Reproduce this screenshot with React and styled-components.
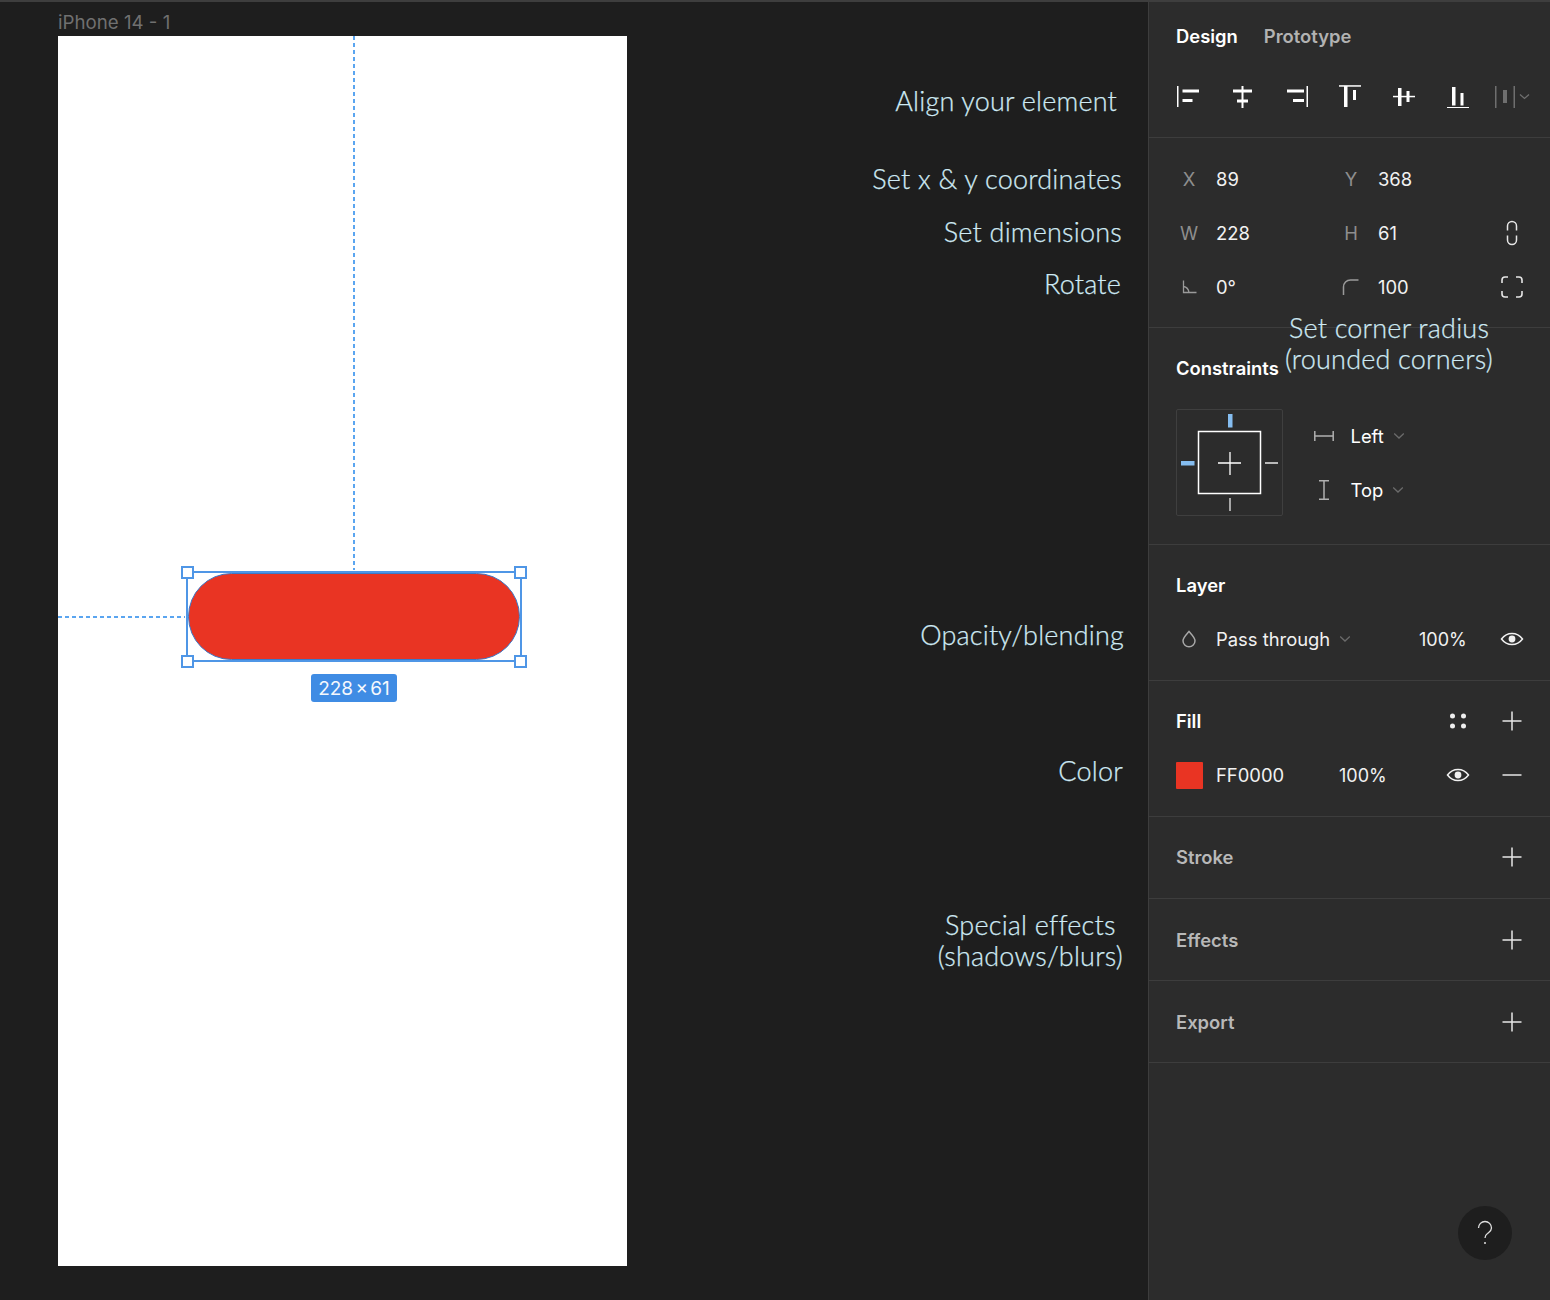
import React from "react";
import styled, { createGlobalStyle } from "styled-components";

const Global = createGlobalStyle`
  html, body { margin: 0; padding: 0; background: #1e1e1e; }
  * { box-sizing: border-box; }
`;

const Page = styled.div`
  position: relative;
  width: 1550px;
  height: 1300px;
  overflow: hidden;
  display: flex;
  background: #1e1e1e;
  border-top: 2px solid #3e3e3e;
  font-family: Inter, "Liberation Sans", sans-serif;
  color: #fff;
`;

const Canvas = styled.main`
  width: 1148px;
  flex: none;
  padding: 8px 0 0 58px;
`;

const FrameLabel = styled.div`
  height: 26px;
  font-size: 18.7px;
  line-height: 25px;
  color: #707070;
`;

const Artboard = styled.div`
  position: relative;
  width: 569px;
  height: 1230px;
  background: #fff;
`;

const VGuide = styled.div`
  position: absolute;
  left: 295px;
  top: 0;
  width: 2px;
  height: 534px;
  background: repeating-linear-gradient(to bottom, #5aa5f0 0 4px, transparent 4px 7px);
`;

const HGuide = styled.div`
  position: absolute;
  left: 0;
  top: 580px;
  width: 127px;
  height: 2px;
  background: repeating-linear-gradient(to right, #5aa5f0 0 4px, transparent 4px 7px);
`;

const Selection = styled.div`
  position: absolute;
  left: 128px;
  top: 535px;
  width: 336px;
  height: 91px;
  border: 2px solid #4f96e6;
`;

const Pill = styled.div`
  width: 100%;
  height: 100%;
  background: #e93423;
  border: 1px solid #3b79c9;
  border-radius: 45px;
`;

const Handle = styled.span`
  position: absolute;
  width: 13px;
  height: 13px;
  background: #fff;
  border: 2px solid #4f96e6;
  left: ${(p) => (p.$right ? "326px" : "-7px")};
  top: ${(p) => (p.$bottom ? "82px" : "-7px")};
`;

const SizeTag = styled.div`
  position: absolute;
  left: 253px;
  top: 638px;
  width: 86px;
  height: 28px;
  background: #3f8ce4;
  border-radius: 3px;
  color: #f4f8fd;
  font-size: 19px;
  line-height: 29px;
  word-spacing: -3px;
  text-align: center;
  white-space: nowrap;
`;

const Note = styled.div`
  position: absolute;
  top: ${(p) => p.$top}px;
  right: ${(p) => p.$right}px;
  font-family: Lato, "Open Sans", sans-serif;
  font-weight: 300;
  font-size: 27px;
  line-height: 31px;
  letter-spacing: 0.2px;
  color: #cfeaf4;
  -webkit-text-stroke: 0.25px #cfeaf4;
  text-align: center;
  white-space: nowrap;
`;

const Panel = styled.aside`
  width: 402px;
  flex: none;
  background: #2c2c2c;
  border-left: 1.5px solid #3d3d3d;
  font-size: 18.4px;
`;

const Section = styled.section`
  height: ${(p) => p.$h}px;
  padding: ${(p) => p.$pt ?? 0}px 24px 0 27px;
  border-bottom: 1.5px solid #3d3d3d;
`;

const Tabs = styled.div`
  display: flex;
  gap: 26px;
  height: 68px;
  align-items: center;
`;

const Tab = styled.div`
  font-weight: 600;
  font-size: 18.4px;
  color: ${(p) => (p.$active ? "#fff" : "#b2b2b2")};
`;

const AlignRow = styled.div`
  display: grid;
  grid-template-columns: repeat(7, 54px);
  margin: 2px 0 0 -15px;
  align-items: center;
  justify-items: center;
  height: 48px;
`;

const PropRow = styled.div`
  display: grid;
  grid-template-columns: 40px 122px 40px 120px 28px;
  align-items: center;
  height: ${(p) => p.$h ?? 54}px;
`;

const PropLabel = styled.div`
  width: 26px;
  text-align: center;
  color: #8e8e8e;
  font-size: 18.4px;
  display: flex;
  justify-content: center;
`;

const Value = styled.div`
  color: #f2f2f2;
  font-size: 18.4px;
  white-space: nowrap;
`;

const Percent = styled.div`
  color: #f2f2f2;
  font-size: 18px;
  white-space: nowrap;
`;

const IconCell = styled.div`
  display: flex;
  justify-content: center;
  align-items: center;
`;

const Title = styled.div`
  font-weight: 600;
  font-size: 18.4px;
  color: ${(p) => (p.$dim ? "#b8b8b8" : "#fff")};
`;

const TitleRow = styled.div`
  display: flex;
  align-items: center;
  justify-content: space-between;
  height: 28px;
`;

const IconPair = styled.div`
  display: flex;
  gap: 26px;
`;

const ConstraintBody = styled.div`
  display: flex;
  gap: 26px;
  margin-top: 27px;
`;

const ConstraintBox = styled.div`
  width: 107px;
  height: 107px;
  flex: none;
  border: 1.5px solid #3f3f3f;
  border-radius: 2px;
`;

const ConstraintList = styled.div`
  display: flex;
  flex-direction: column;
`;

const ConstraintRow = styled.div`
  display: flex;
  align-items: center;
  height: 54px;
  gap: 3.5px;
`;

const ConstraintIcon = styled.span`
  width: 29px;
  margin-right: 9px;
  display: flex;
  justify-content: center;
`;

const LayerRow = styled.div`
  display: grid;
  grid-template-columns: 40px 203px 79px 28px;
  align-items: center;
  height: 54px;
  margin-top: 13px;
`;

const FillRow = styled.div`
  display: grid;
  grid-template-columns: 40px 123px 105px 28px 26px 28px;
  align-items: center;
  height: 54px;
  margin-top: 13px;
`;

const Select = styled.div`
  display: flex;
  align-items: center;
  gap: 9px;
`;

const Swatch = styled.div`
  width: 27px;
  height: 27px;
  background: #e93423;
  border-radius: 1px;
`;

const HelpButton = styled.div`
  position: absolute;
  left: 1458px;
  top: 1204px;
  width: 54px;
  height: 54px;
  border-radius: 50%;
  background: #1e1e1e;
  display: flex;
  align-items: center;
  justify-content: center;
`;

const Ico = ({ w = 24, h = 24, children, ...r }) => (
  <svg width={w} height={h} viewBox={`0 0 ${w} ${h}`} fill="none" style={{ display: "block" }} {...r}>
    {children}
  </svg>
);

const Bars = ({ lines, bars, fill = "#fff" }) => (
  <Ico>
    {[...lines, ...bars].map(([x, y, w, h], i) => (
      <rect key={i} x={x} y={y} width={w} height={h} fill={fill} />
    ))}
  </Ico>
);

const alignIcons = [
  { lines: [[1, 2, 1.5, 21]], bars: [[6.5, 5.5, 16.5, 3], [6.5, 15, 10, 3]] },
  { lines: [[11.5, 2, 2, 22]], bars: [[3, 5.5, 19, 3], [7, 15.5, 11, 3]] },
  { lines: [[22.5, 2, 1.5, 21]], bars: [[3, 5.5, 17, 3], [9, 15, 11, 3]] },
  { lines: [[1, 1.2, 22, 1.5]], bars: [[6, 2, 3.5, 21], [15, 6, 3, 10]] },
  { lines: [[1, 11.8, 22, 1.5]], bars: [[6, 4, 3.5, 18], [14.5, 7, 3, 11]] },
  { lines: [[1, 23, 22, 1.5]], bars: [[6, 3, 3.5, 18.5], [14.5, 9, 3, 12.5]] },
];

const Distribute = () => (
  <Ico w={36} h={24}>
    <rect x="1" y="2" width="1.5" height="22" fill="#6f6f6f" />
    <rect x="19.500" y="2" width="1.5" height="22" fill="#6f6f6f" />
    <rect x="9" y="6" width="4" height="13" fill="#6f6f6f" />
    <path d="M26 10.500l4.500 4 4.500-4" stroke="#6f6f6f" strokeWidth="1.3" />
  </Ico>
);

const Chevron = () => (
  <Ico w={12} h={8}>
    <path d="M1.200 1.500l4.800 4.500 4.800-4.500" stroke="#6b6b6b" strokeWidth="1.3" />
  </Ico>
);

const Plus = () => (
  <Ico w={28} h={28}>
    <path d="M14 4.500v19M4.500 14h19" stroke="#e6e6e6" strokeWidth="1.5" />
  </Ico>
);

const Minus = () => (
  <Ico w={28} h={28}>
    <path d="M4.500 14h19" stroke="#e6e6e6" strokeWidth="1.5" />
  </Ico>
);

const Eye = () => (
  <Ico w={28} h={28}>
    <path d="M3.500 14C6.500 10 10 8.500 14 8.500s7.500 1.500 10.500 5.500c-3 4-6.500 5.500-10.500 5.500S6.500 18 3.500 14z" stroke="#f0f0f0" strokeWidth="1.5" />
    <circle cx="14" cy="14" r="3.400" fill="#f0f0f0" />
  </Ico>
);

const Dots = () => (
  <Ico w={28} h={28}>
    <circle cx="8.500" cy="9" r="2.500" fill="#eee" />
    <circle cx="19.500" cy="9" r="2.500" fill="#eee" />
    <circle cx="8.500" cy="19" r="2.500" fill="#eee" />
    <circle cx="19.500" cy="19" r="2.500" fill="#eee" />
  </Ico>
);

const Angle = () => (
  <Ico w={16} h={16}>
    <path d="M2.500 1.500v12h13M2.500 7.500c3 .5 5 2.500 5.500 6" stroke="#9a9a9a" strokeWidth="1.300" />
  </Ico>
);

const Corner = () => (
  <Ico w={18} h={18}>
    <path d="M1.500 17V9c0-4 3-7 7-7h8" stroke="#9a9a9a" strokeWidth="1.500" />
  </Ico>
);

const Ratio = () => (
  <Ico w={14} h={26}>
    <path d="M2.500 10.500V6a4.500 4.500 0 019 0v4.500M2.500 15.500V20a4.500 4.500 0 009 0v-4.500" stroke="#e6e6e6" strokeWidth="1.500" />
  </Ico>
);

const Corners = () => (
  <Ico w={24} h={24}>
    <path d="M2 8V5a3 3 0 013-3h3M16 2h3a3 3 0 013 3v3M22 16v3a3 3 0 01-3 3h-3M8 22H5a3 3 0 01-3-3v-3" stroke="#e6e6e6" strokeWidth="1.600" />
  </Ico>
);

const Drop = () => (
  <Ico w={16} h={18}>
    <path d="M8 1.500c3 3.500 6 6 6 9.300a6 6 0 01-12 0c0-3.300 3-5.800 6-9.300z" stroke="#a8a8a8" strokeWidth="1.500" />
  </Ico>
);

const HSpan = () => (
  <Ico w={20} h={10}>
    <path d="M.8 0v10M19.200 0v10M1 5h18" stroke="#b0b0b0" strokeWidth="1.500" />
  </Ico>
);

const VSpan = () => (
  <Ico w={10} h={20}>
    <path d="M0 .8h10M0 19.200h10M5 1v18" stroke="#b0b0b0" strokeWidth="1.500" />
  </Ico>
);

const ConstraintDiagram = () => (
  <Ico w={104} h={104}>
    <g transform="translate(1 1)">
      <rect x="20.500" y="20.500" width="62" height="62" stroke="#fff" strokeWidth="1.500" />
      <path d="M52 41v23M40 52h23" stroke="#fff" strokeWidth="1.300" />
      <rect x="50" y="3" width="4.500" height="13.500" fill="#85bdf0" />
      <rect x="3" y="50" width="13.500" height="4.500" fill="#85bdf0" />
      <path d="M87 52h13M52 87v13" stroke="#e8e8e8" strokeWidth="1.300" />
    </g>
  </Ico>
);

const HelpGlyph = () => (
  <Ico w={18} h={26}>
    <path d="M2.500 8a6.500 6.500 0 1113 0c0 3-2 4-4 5.500-1.500 1-2.500 2-2.500 4.500" stroke="#e0e0e0" strokeWidth="1.300" />
    <circle cx="9" cy="23" r="1" fill="#e0e0e0" />
  </Ico>
);

const CollapsedSection = ({ title, pt = 27 }) => (
  <Section $h={82} $pt={pt}>
    <TitleRow>
      <Title $dim>{title}</Title>
      <Plus />
    </TitleRow>
  </Section>
);

export default function App() {
  return (
    <>
      <Global />
      <Page>
        <Canvas>
          <FrameLabel>iPhone 14 - 1</FrameLabel>
          <Artboard>
            <VGuide />
            <HGuide />
            <Selection>
              <Pill />
              <Handle />
              <Handle $right />
              <Handle $bottom />
              <Handle $right $bottom />
            </Selection>
            <SizeTag>228 × 61</SizeTag>
          </Artboard>
        </Canvas>

        <Panel>
          <Section $h={136}>
            <Tabs>
              <Tab $active>Design</Tab>
              <Tab>Prototype</Tab>
            </Tabs>
            <AlignRow>
              {alignIcons.map((a, i) => (
                <Bars key={i} {...a} />
              ))}
              <Distribute />
            </AlignRow>
          </Section>

          <Section $h={190} $pt={14}>
            <PropRow>
              <PropLabel>X</PropLabel>
              <Value>89</Value>
              <PropLabel>Y</PropLabel>
              <Value>368</Value>
            </PropRow>
            <PropRow>
              <PropLabel>W</PropLabel>
              <Value>228</Value>
              <PropLabel>H</PropLabel>
              <Value>61</Value>
              <IconCell><Ratio /></IconCell>
            </PropRow>
            <PropRow $h={53}>
              <PropLabel><Angle /></PropLabel>
              <Value>0°</Value>
              <PropLabel><Corner /></PropLabel>
              <Value>100</Value>
              <IconCell><Corners /></IconCell>
            </PropRow>
          </Section>

          <Section $h={217} $pt={26}>
            <TitleRow><Title>Constraints</Title></TitleRow>
            <ConstraintBody>
              <ConstraintBox><ConstraintDiagram /></ConstraintBox>
              <ConstraintList>
                <ConstraintRow>
                  <ConstraintIcon><HSpan /></ConstraintIcon>
                  <Select>Left <Chevron /></Select>
                </ConstraintRow>
                <ConstraintRow>
                  <ConstraintIcon><VSpan /></ConstraintIcon>
                  <Select>Top <Chevron /></Select>
                </ConstraintRow>
              </ConstraintList>
            </ConstraintBody>
          </Section>

          <Section $h={136} $pt={26}>
            <TitleRow><Title>Layer</Title></TitleRow>
            <LayerRow>
              <PropLabel><Drop /></PropLabel>
              <Select><Value>Pass through</Value><Chevron /></Select>
              <Percent>100%</Percent>
              <IconCell><Eye /></IconCell>
            </LayerRow>
          </Section>

          <Section $h={136} $pt={26}>
            <TitleRow>
              <Title>Fill</Title>
              <IconPair><Dots /><Plus /></IconPair>
            </TitleRow>
            <FillRow>
              <Swatch />
              <Value>FF0000</Value>
              <Percent>100%</Percent>
              <IconCell><Eye /></IconCell>
              <span />
              <IconCell><Minus /></IconCell>
            </FillRow>
          </Section>

          <CollapsedSection title="Stroke" pt={26} />
          <CollapsedSection title="Effects" />
          <CollapsedSection title="Export" />
        </Panel>

        <Note $top={83} $right={433}>Align your element</Note>
        <Note $top={161} $right={428}>Set x &amp; y coordinates</Note>
        <Note $top={214} $right={428}>Set dimensions</Note>
        <Note $top={266} $right={429}>Rotate</Note>
        <Note $top={617} $right={426}>Opacity/blending</Note>
        <Note $top={753} $right={427}>Color</Note>
        <Note $top={907} $right={427}>Special effects<br />(shadows/blurs)</Note>
        <Note $top={310} $right={57}>Set corner radius<br />(rounded corners)</Note>

        <HelpButton><HelpGlyph /></HelpButton>
      </Page>
    </>
  );
}
